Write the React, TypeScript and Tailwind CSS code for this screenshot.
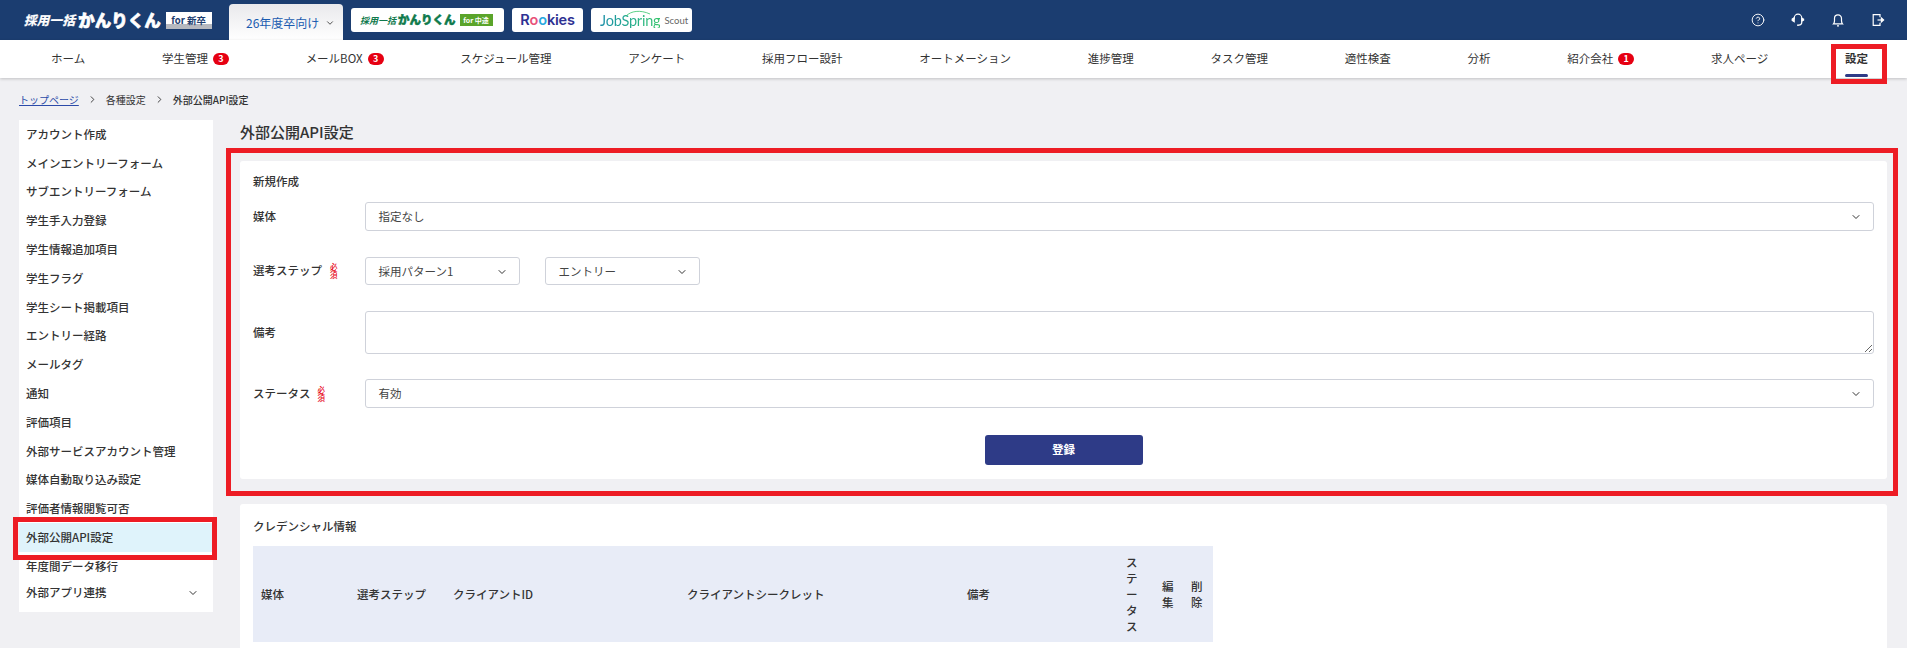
import { ChevronDown, ChevronRight, CircleHelp } from 'lucide-react';

const navItems = [
  { label: "ホーム" },
  { label: "学生管理", badge: 3 },
  { label: "メールBOX", badge: 3 },
  { label: "スケジュール管理" },
  { label: "アンケート" },
  { label: "採用フロー設計" },
  { label: "オートメーション" },
  { label: "進捗管理" },
  { label: "タスク管理" },
  { label: "適性検査" },
  { label: "分析" },
  { label: "紹介会社", badge: 1 },
  { label: "求人ページ" },
];

const sideItems = [
  "アカウント作成",
  "メインエントリーフォーム",
  "サブエントリーフォーム",
  "学生手入力登録",
  "学生情報追加項目",
  "学生フラグ",
  "学生シート掲載項目",
  "エントリー経路",
  "メールタグ",
  "通知",
  "評価項目",
  "外部サービスアカウント管理",
  "媒体自動取り込み設定",
  "評価者情報閲覧可否",
];

function Required() {
  return (
    <span className="flex flex-col text-[7.5px] leading-[8px] text-[#e60012]">
      <span>必</span>
      <span>須</span>
    </span>
  );
}

function Select({ value, className }: { value: string; className: string }) {
  return (
    <div className={`flex items-center justify-between pl-[12.5px] pr-[11px] pt-[1px] bg-white border border-[#cfd2da] rounded-[3px] text-[11.5px] text-[#444] ${className}`}>
      <span>{value}</span>
      <ChevronDown size={12} strokeWidth={2} className="text-[#333]" />
    </div>
  );
}

function Header() {
  return (
    <header className="h-10 bg-[#1b3d70] flex pl-6 pr-[22px] items-center">
      <div className="flex items-center w-[189px] text-white">
        <span className="text-[12.5px] font-bold italic leading-none whitespace-nowrap tracking-[0.3px] [-webkit-text-stroke:0.3px_white]">採用一括</span>
        <span className="ml-[3px] text-[16.5px] font-black leading-none whitespace-nowrap [-webkit-text-stroke:0.7px_white]">かんりくん</span>
        <span className="ml-[5px] w-[46px] h-[17px] flex items-center justify-center bg-gradient-to-b from-white from-70% to-[#b5b8bf] to-70% text-[#1b3d70] text-[9.5px] font-bold whitespace-nowrap">for 新卒</span>
      </div>
      <div className="ml-4 w-[114px] h-9 self-end rounded-t-[4px] bg-gradient-to-b from-[#e9e9ec] to-white flex items-center pl-[17px] gap-[6px] text-[#1a5bb0] text-[12px] pt-[2px]">
        <span>26年度卒向け</span>
        <ChevronDown size={10} strokeWidth={2} className="text-[#333]" />
      </div>
      <div className="ml-2 w-[153px] h-6 rounded-[3px] bg-white flex items-center pl-[9px] text-[#0f7a4c]">
        <span className="text-[9px] font-bold italic leading-none whitespace-nowrap">採用一括</span>
        <span className="ml-[2px] text-[11.5px] font-black leading-none whitespace-nowrap [-webkit-text-stroke:0.5px_#0f7a4c]">かんりくん</span>
        <span className="ml-[4px] w-[33px] h-3 flex items-center justify-center bg-[#5aa42a] text-white text-[7px] font-bold whitespace-nowrap">for 中途</span>
      </div>
      <div className="ml-2 w-[71px] h-6 rounded-[3px] bg-white flex items-center justify-center text-[#2e3192] text-[14.5px] font-semibold font-['Inter',sans-serif] tracking-[-0.2px]">
        R<span className="text-[#e8527a]">o</span><span className="text-[#29a9e0]">o</span>kies
      </div>
      <div className="relative ml-2 w-[101px] h-6 rounded-[3px] bg-white flex items-center pl-[9px] pt-[2px] font-['Lato',sans-serif]">
        <span className="text-[14.5px] leading-none bg-gradient-to-r from-[#1d8fa8] to-[#35c46a] bg-clip-text text-transparent tracking-[-0.2px]">JobSpring</span>
        <span className="ml-[4px] text-[9.5px] text-[#666]">Scout</span>
        <svg className="absolute left-[34px] top-[2px]" width="26" height="7" viewBox="0 0 26 7" fill="none">
          <path d="M1 6C6 1 15 -0.5 25 4" stroke="#35c46a" strokeWidth="0.8" />
        </svg>
      </div>
      <div className="ml-auto flex items-center gap-[26px] text-white">
        <CircleHelp size={14} strokeWidth={1.6} />
        <svg width="14" height="14" viewBox="0 0 14 14" fill="none" stroke="currentColor" strokeWidth="1.2">
          <path d="M3.2 6V5a3.8 3.8 0 0 1 7.6 0v4.2c0 1.7-1.3 2.9-3.2 3" />
          <path d="M3.2 4.8 1.2 6v1.4l2 1.2z" fill="currentColor" />
          <path d="M10.8 5.4 12.6 6.2v1l-1.8.8z" fill="currentColor" />
          <circle cx="7" cy="12.2" r="0.9" fill="currentColor" stroke="none" />
        </svg>
        <svg width="14" height="14" viewBox="0 0 14 14" fill="none" stroke="currentColor" strokeWidth="1.2">
          <path d="M2.5 10.8h9c-.8-.9-1-1.6-1-3V5.4a3.5 3.5 0 0 0-7 0v2.4c0 1.4-.2 2.1-1 3z" />
          <path d="M6 12.8h2" />
        </svg>
        <svg width="14" height="14" viewBox="0 0 14 14" fill="none" stroke="currentColor" strokeWidth="1.2">
          <path d="M9 4.2V1.6H2.2v10.8H9V9.8" />
          <path d="M6.5 7h5.6" />
          <path d="m10.4 5 2.2 2-2.2 2z" fill="currentColor" />
        </svg>
      </div>
    </header>
  );
}

function Nav() {
  return (
    <nav className="relative h-[38px] bg-white shadow-[0_1px_3px_rgba(0,0,0,0.2)] flex items-center justify-between pl-[51px] pr-[39px] text-[11.5px] text-[#333]">
      {navItems.map((item, index) => (
        <div key={index} className="flex items-center gap-[5px] whitespace-nowrap">
          <span>{item.label}</span>
          {item.badge && (
            <span className="w-4 h-3 rounded-full bg-[#e60012] text-white text-[9px] font-bold leading-3 text-center">{item.badge}</span>
          )}
        </div>
      ))}
      <div className="relative font-bold whitespace-nowrap">
        設定
        <div className="absolute left-0 right-0 top-[24px] h-[3px] rounded-full bg-[#2e3b87]"></div>
        <div className="absolute -left-[14px] -right-[19px] -top-[6px] h-10 border-[5px] border-[#ed1c24]"></div>
      </div>
    </nav>
  );
}

function Sidebar() {
  return (
    <aside className="ml-[19px] w-[194px] h-[492px] bg-white pb-[7px] shrink-0 text-[11.5px] font-medium text-[#333]">
      {sideItems.map((item, index) => (
        <div key={index} className="h-[28.8px] flex items-center pl-[7px] whitespace-nowrap">{item}</div>
      ))}
      <div className="relative h-[28.8px] flex items-center pl-[7px] bg-[#dff3fb] whitespace-nowrap">
        外部公開API設定
        <div className="absolute -left-[6px] -right-[4px] -top-[6px] -bottom-[8px] border-[5px] border-[#ed1c24]"></div>
      </div>
      <div className="h-[28.8px] flex items-center pl-[7px] whitespace-nowrap">年度間データ移行</div>
      <div className="h-6 flex items-center justify-between pl-[7px] pr-[14px] whitespace-nowrap">
        <span>外部アプリ連携</span>
        <ChevronDown size={12} strokeWidth={2} />
      </div>
    </aside>
  );
}

function CreateForm() {
  return (
    <section className="relative h-[318px] bg-white rounded-[3px] px-[13px] pt-[12px] text-[11.5px] text-[#333]">
      <div className="absolute -left-[14px] -right-[11px] -top-[13px] -bottom-[17px] border-[5px] border-[#ed1c24] pointer-events-none"></div>
      <div className="font-medium leading-4">新規作成</div>
      <div className="mt-[13px] flex items-center">
        <div className="w-[112px] font-medium">媒体</div>
        <Select value="指定なし" className="flex-1 h-[29px]" />
      </div>
      <div className="mt-[26px] flex items-center">
        <div className="w-[112px] flex items-center gap-2 font-medium">
          選考ステップ
          <Required />
        </div>
        <Select value="採用パターン1" className="w-[155px] h-7" />
        <Select value="エントリー" className="ml-[25px] w-[155px] h-7" />
      </div>
      <div className="mt-[26px] flex items-center">
        <div className="w-[112px] font-medium">備考</div>
        <textarea className="flex-1 h-[43px] bg-white border border-[#cfd2da] rounded-[3px]"></textarea>
      </div>
      <div className="mt-[25px] flex items-center">
        <div className="w-[112px] flex items-center gap-[7px] font-medium">
          ステータス
          <Required />
        </div>
        <Select value="有効" className="flex-1 h-[29px]" />
      </div>
      <div className="mt-[27px] flex justify-center">
        <button className="w-[158px] h-[30px] bg-[#2e3b87] rounded-[3px] text-white font-bold text-[11.5px]">登録</button>
      </div>
    </section>
  );
}

function CredentialTable() {
  return (
    <section className="mt-[25px] h-[200px] bg-white rounded-[3px] px-[13px] pt-[14px] text-[11.5px] text-[#333]">
      <div className="font-medium leading-4">クレデンシャル情報</div>
      <table className="mt-3 w-[960px] table-fixed bg-[#e8ecf7] leading-4 text-left">
        <colgroup>
          <col className="w-[96px]" />
          <col className="w-[96px]" />
          <col className="w-[234px]" />
          <col className="w-[280px]" />
          <col className="w-[159px]" />
          <col className="w-[36px]" />
          <col className="w-[29px]" />
          <col className="w-[30px]" />
        </colgroup>
        <thead>
          <tr className="h-[96px]">
            <th className="px-2 font-medium">媒体</th>
            <th className="px-2 font-medium">選考ステップ</th>
            <th className="px-2 font-medium">クライアントID</th>
            <th className="px-2 font-medium">クライアントシークレット</th>
            <th className="px-2 font-medium">備考</th>
            <th className="px-2 font-medium">ステータス</th>
            <th className="px-2 font-medium">編集</th>
            <th className="px-2 font-medium">削除</th>
          </tr>
        </thead>
      </table>
    </section>
  );
}

export default function App() {
  return (
    <div className="h-screen overflow-hidden bg-[#f0f0f3] font-['Noto_Sans_CJK_JP','Noto_Sans',sans-serif]">
      <Header />
      <Nav />
      <div className="h-[42px] pl-[19px] pt-[1px] flex items-center text-[10px] text-[#333]">
        <a className="text-[#2b4aa8] underline">トップページ</a>
        <ChevronRight size={11} strokeWidth={2} className="mx-2" />
        <span>各種設定</span>
        <ChevronRight size={11} strokeWidth={2} className="mx-2" />
        <span className="font-medium">外部公開API設定</span>
      </div>
      <div className="flex">
        <Sidebar />
        <main className="ml-[27px] mr-5 flex-1">
          <h1 className="h-[41px] text-[15px] leading-6 font-medium text-[#333]">外部公開API設定</h1>
          <CreateForm />
          <CredentialTable />
        </main>
      </div>
    </div>
  );
}
